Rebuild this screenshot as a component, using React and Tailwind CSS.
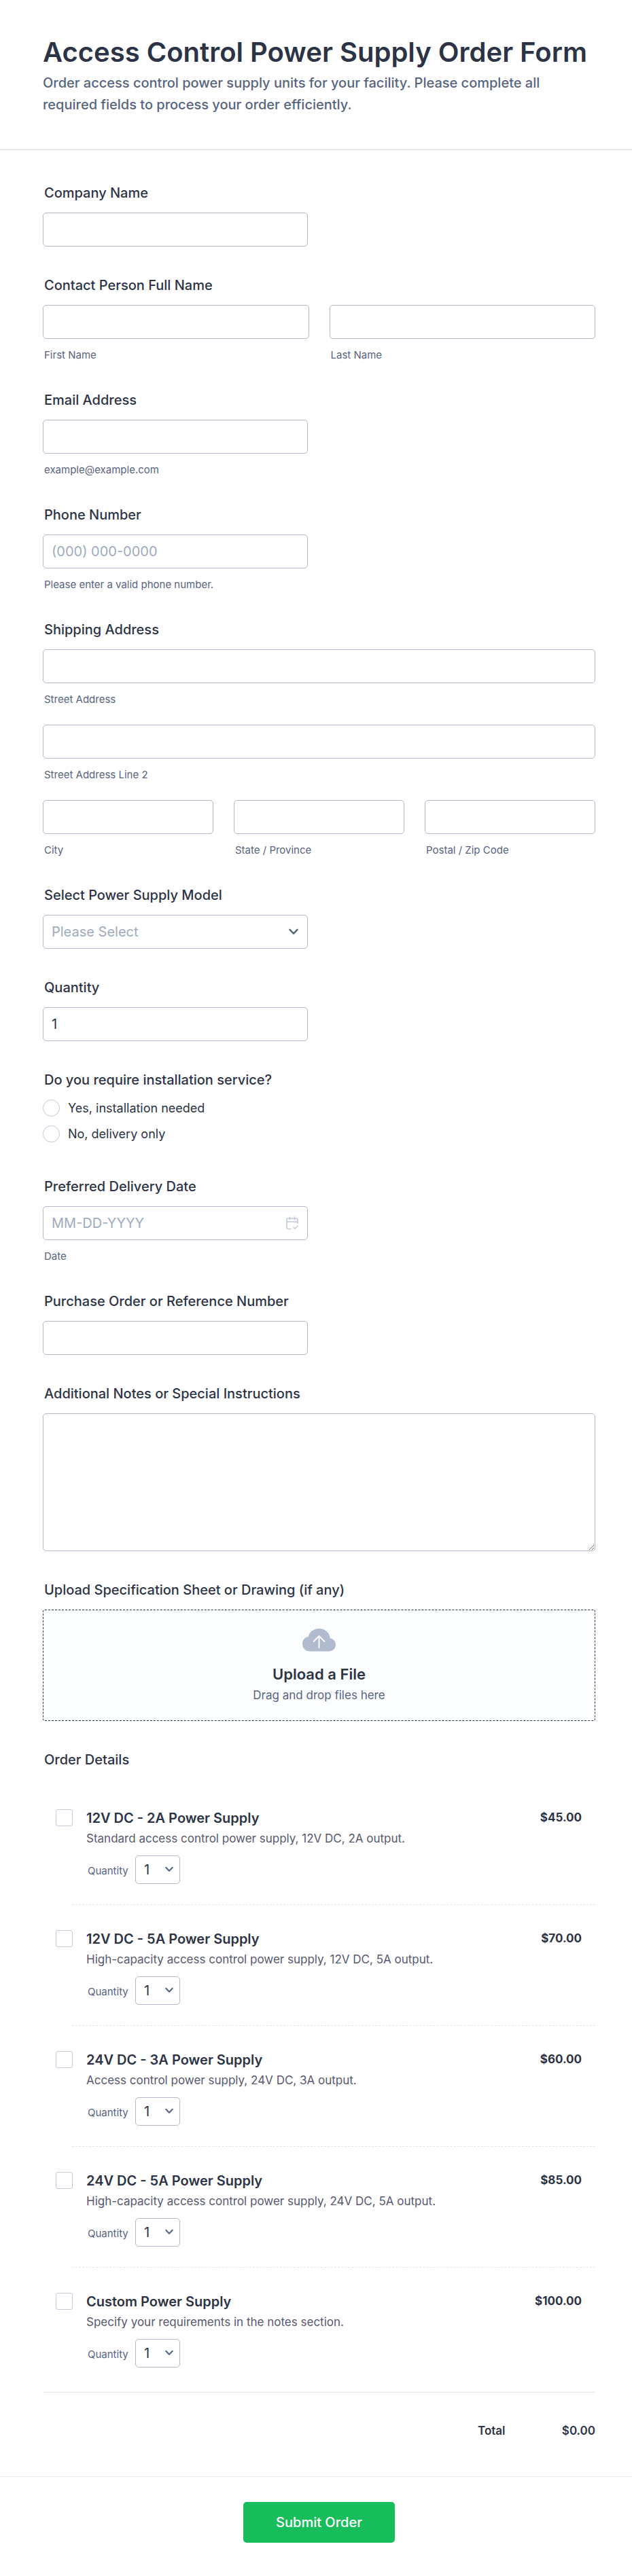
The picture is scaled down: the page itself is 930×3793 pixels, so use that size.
import { useState } from 'react';

const products = [
  { id: 'p12-2', name: '12V DC - 2A Power Supply', description: 'Standard access control power supply, 12V DC, 2A output.', price: 45 },
  { id: 'p12-5', name: '12V DC - 5A Power Supply', description: 'High-capacity access control power supply, 12V DC, 5A output.', price: 70 },
  { id: 'p24-3', name: '24V DC - 3A Power Supply', description: 'Access control power supply, 24V DC, 3A output.', price: 60 },
  { id: 'p24-5', name: '24V DC - 5A Power Supply', description: 'High-capacity access control power supply, 24V DC, 5A output.', price: 85 },
  { id: 'custom', name: 'Custom Power Supply', description: 'Specify your requirements in the notes section.', price: 100 },
];

const quantities = [1, 2, 3, 4, 5, 6, 7, 8, 9, 10];

const labelClass = 'block pl-0.5 text-[20px] leading-6 font-medium text-[#2c3345]';
const inputClass =
  'block h-[50px] w-full rounded-[5px] border border-[#b2b8c8] bg-white px-3 text-[20px] outline-none placeholder:text-[#a0abbd] focus:border-blue-500';

function Chevron({ className }) {
  return (
    <svg viewBox="0 0 14 10" fill="none" stroke="#57647e" strokeWidth="2.4" className={`pointer-events-none absolute ${className}`}>
      <path d="M1.5 1.8 7 7.6l5.5-5.8" strokeLinecap="round" strokeLinejoin="round" />
    </svg>
  );
}

function CalendarIcon() {
  return (
    <svg viewBox="0 0 18 20" fill="none" stroke="#c4c9d6" strokeWidth="1.5" strokeLinecap="round" strokeLinejoin="round" className="pointer-events-none absolute top-[15px] right-[14px] h-5 w-[18px]">
      <path d="M7 18.500H3a2 2 0 0 1-2-2V5a2 2 0 0 1 2-2h12a2 2 0 0 1 2 2v5.500M1 8h16M5.500 1v4M12.500 1v4M11 16l2 2.200 4-4.200" />
    </svg>
  );
}

function CloudIcon() {
  return (
    <svg viewBox="0 0 49 34" className="h-[34px] w-[49px]">
      <path fill="#b1bbcf" d="M24.500 0C16.600 0 10.300 5 8.800 11.700 3.900 12.500 0 16.800 0 22.500 0 29 4.900 33.500 11 33.500h27.500C44.300 33.500 49 29.400 49 23.700c0-4.900-3.400-8.700-8.200-9.500C40.300 6 32.700 0 24.500 0Z" />
      <path d="M24.500 28V11M16.500 19l8-8.200 8 8.200" fill="none" stroke="#fff" strokeWidth="1.800" strokeLinecap="round" strokeLinejoin="round" />
    </svg>
  );
}

function Field({ label, htmlFor, half = false, children }) {
  return (
    <div>
      <label htmlFor={htmlFor} className={`${labelClass} mb-[17px]`}>{label}</label>
      <div className={half ? 'w-full sm:w-[48%]' : 'w-full'}>{children}</div>
    </div>
  );
}

function Group({ label, children }) {
  return (
    <fieldset>
      <legend className={`${labelClass} mb-[17px]`}>{label}</legend>
      {children}
    </fieldset>
  );
}

function SubInput({ id, label, type = 'text' }) {
  return (
    <div>
      <input id={id} type={type} className={inputClass} />
      <SubLabel htmlFor={id}>{label}</SubLabel>
    </div>
  );
}

function SubLabel({ htmlFor, children }) {
  return (
    <label htmlFor={htmlFor} className="mt-[14px] block pl-0.5 text-[15px] leading-[19px] text-[#57647e]">
      {children}
    </label>
  );
}

function Product({ product, item, onChange, last }) {
  return (
    <li className={last ? 'ml-[43px] pb-9' : 'mb-[37px] ml-[43px] border-b border-dashed border-[#e3e5ec] pb-[30px]'}>
      <div className="-ml-6 flex items-start pr-5">
        <input
          id={product.id}
          type="checkbox"
          checked={item.checked}
          onChange={(e) => onChange({ ...item, checked: e.target.checked })}
          className="size-[25px] shrink-0 appearance-none rounded-[3px] border border-[#c3cad8] bg-white checked:bg-[#18bd5b]"
        />
        <div className="ml-5 flex-1">
          <label htmlFor={product.id} className="block text-[20px] leading-[26px] font-semibold">{product.name}</label>
          <p className="mt-0.5 text-[17px] leading-[30px] text-[#57586e]">{product.description}</p>
          <div className="mt-2.5 flex items-center">
            <label htmlFor={`${product.id}-qty`} className="w-[72px] pt-1 pl-0.5 text-[15px] leading-5 text-[#57647e]">Quantity</label>
            <div className="relative">
              <select
                id={`${product.id}-qty`}
                value={item.quantity}
                onChange={(e) => onChange({ ...item, quantity: Number(e.target.value) })}
                className="block h-[42px] w-[66px] appearance-none rounded-[5px] border border-[#b2b8c8] bg-white pl-3 text-[20px]"
              >
                {quantities.map((n) => <option key={n}>{n}</option>)}
              </select>
              <Chevron className="top-4 right-[10px] h-[9px] w-3" />
            </div>
          </div>
        </div>
        <span className="text-[17px] leading-6 font-bold">${product.price.toFixed(2)}</span>
      </div>
    </li>
  );
}

export default function App() {
  const [items, setItems] = useState(() =>
    Object.fromEntries(products.map((p) => [p.id, { checked: false, quantity: 1 }]))
  );
  const [model, setModel] = useState('');

  const total = products.reduce((sum, p) => sum + (items[p.id].checked ? p.price * items[p.id].quantity : 0), 0);

  return (
    <form onSubmit={(e) => e.preventDefault()} className="bg-white font-['Inter',sans-serif] text-[#2c3345]">
      <header className="border-b border-[#d3d8e4] px-[63px] pt-[50px] pb-[50px]">
        <h1 className="mb-0.5 text-[40px] leading-[54px] font-semibold">Access Control Power Supply Order Form</h1>
        <p className="max-w-[780px] text-[20px] leading-8 font-medium text-[#57647e]">
          Order access control power supply units for your facility. Please complete all required fields to process your order efficiently.
        </p>
      </header>

      <div className="flex flex-col gap-[45px] pt-[51px] pr-[54px] pl-[63px]">
        <Field label="Company Name" htmlFor="company" half>
          <input id="company" type="text" className={inputClass} />
        </Field>

        <Group label="Contact Person Full Name">
          <div className="grid gap-[30px] sm:grid-cols-2">
            <SubInput id="first" label="First Name" />
            <SubInput id="last" label="Last Name" />
          </div>
        </Group>

        <Field label="Email Address" htmlFor="email" half>
          <SubInput id="email" type="email" label="example@example.com" />
        </Field>

        <Field label="Phone Number" htmlFor="phone" half>
          <input id="phone" type="tel" placeholder="(000) 000-0000" className={inputClass} />
          <SubLabel htmlFor="phone">Please enter a valid phone number.</SubLabel>
        </Field>

        <Group label="Shipping Address">
          <div className="flex flex-col gap-7">
            <SubInput id="street" label="Street Address" />
            <SubInput id="street2" label="Street Address Line 2" />
            <div className="grid gap-[30px] sm:grid-cols-3">
              <SubInput id="city" label="City" />
              <SubInput id="state" label="State / Province" />
              <SubInput id="zip" label="Postal / Zip Code" />
            </div>
          </div>
        </Group>

        <Field label="Select Power Supply Model" htmlFor="model" half>
          <div className="relative">
            <select
              id="model"
              value={model}
              onChange={(e) => setModel(e.target.value)}
              className={`${inputClass} appearance-none ${model ? '' : 'text-[#a0abbd]'}`}
            >
              <option value="">Please Select</option>
              {products.map((p) => <option key={p.id} value={p.id}>{p.name}</option>)}
            </select>
            <Chevron className="top-5 right-[14px] h-[10px] w-[14px]" />
          </div>
        </Field>

        <Field label="Quantity" htmlFor="quantity" half>
          <input id="quantity" type="text" inputMode="numeric" defaultValue="1" className={inputClass} />
        </Field>

        <Group label="Do you require installation service?">
          <div className="flex flex-col gap-[13px] pb-2">
            {['Yes, installation needed', 'No, delivery only'].map((option) => (
              <label key={option} className="flex items-center gap-3 text-[18px] leading-[25px]">
                <input type="radio" name="installation" className="size-[25px] appearance-none rounded-full border border-[#c3cad8] bg-white checked:border-8 checked:border-[#18bd5b]" />
                {option}
              </label>
            ))}
          </div>
        </Group>

        <Field label="Preferred Delivery Date" htmlFor="date" half>
          <div className="relative">
            <input id="date" type="text" placeholder="MM-DD-YYYY" className={inputClass} />
            <CalendarIcon />
          </div>
          <SubLabel htmlFor="date">Date</SubLabel>
        </Field>

        <Field label="Purchase Order or Reference Number" htmlFor="reference" half>
          <input id="reference" type="text" className={inputClass} />
        </Field>

        <Field label="Additional Notes or Special Instructions" htmlFor="notes">
          <textarea id="notes" className="block h-[203px] w-full rounded-[5px] border border-[#b2b8c8] bg-white p-3 text-[20px] outline-none focus:border-blue-500" />
        </Field>

        <Field label="Upload Specification Sheet or Drawing (if any)" htmlFor="upload">
          <label htmlFor="upload" className="relative flex cursor-pointer flex-col items-center rounded-[3px] border border-dashed border-[#2c3345] bg-[#fbfdff] pt-[27px] pb-[22px]">
            <CloudIcon />
            <span className="mt-[17px] text-[22px] leading-8 font-semibold">Upload a File</span>
            <span className="text-[17px] leading-[30px] text-[#57647e]">Drag and drop files here</span>
            <input id="upload" type="file" className="sr-only" />
          </label>
        </Field>

        <section>
          <h2 className={labelClass}>Order Details</h2>
          <ul className="pt-[61px]">
            {products.map((p, i) => (
              <Product
                key={p.id}
                product={p}
                item={items[p.id]}
                onChange={(next) => setItems({ ...items, [p.id]: next })}
                last={i === products.length - 1}
              />
            ))}
          </ul>
          <div className="flex justify-end border-t border-[#e3e5ec] pt-11 pb-[55px] text-[17px] leading-6 font-semibold">
            <span className="w-[87px]">Total</span>
            <output className="w-[86px] text-right">${total.toFixed(2)}</output>
          </div>
        </section>
      </div>

      <footer className="flex justify-center border-t border-[#e9eaef] pt-[37px] pr-[54px] pb-[49px] pl-[63px]">
        <button type="submit" className="h-[60px] w-[223px] rounded-[5px] bg-[#18bd5b] text-[20px] font-medium text-white">Submit Order</button>
      </footer>
    </form>
  );
}
